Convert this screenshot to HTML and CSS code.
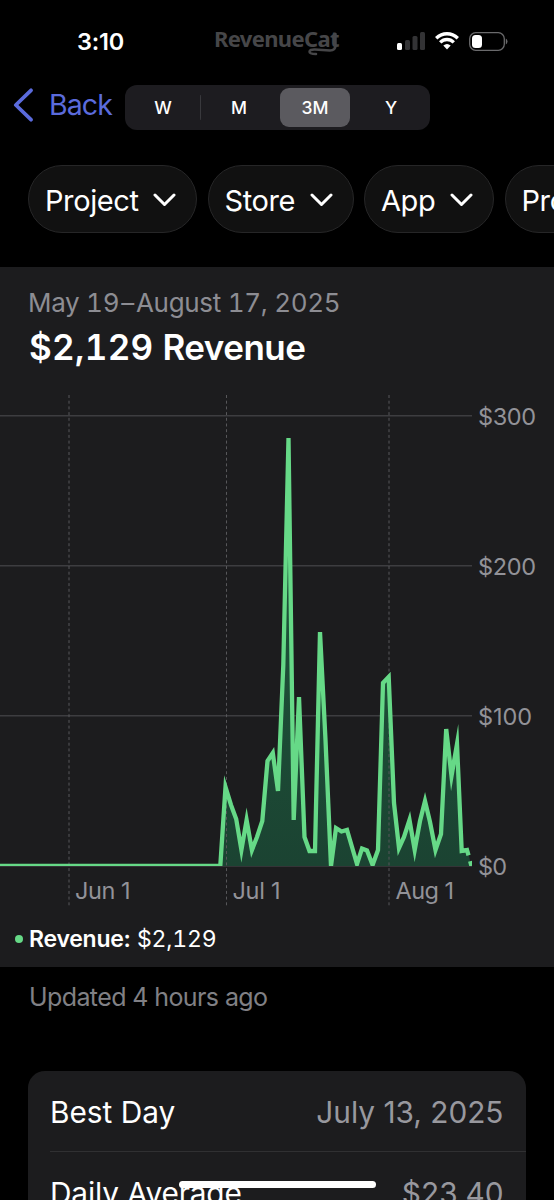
FILE: index.html
```html
<!DOCTYPE html>
<html lang="en">
<head>
  <meta charset="UTF-8">
  <meta name="viewport" content="width=device-width, initial-scale=1.0">
  <title>Revenue</title>
  <link rel="stylesheet" href="styles.css">
</head>
<body>
  <header>
    <!-- Status bar -->
    <div class="status-bar">
      <span class="time">3:10</span>
      <div class="logo">
        <span>RevenueCat</span>
        <svg class="logo-tail" width="36" height="28" viewBox="0 0 36 28">
          <path d="M31.500 4V15Q31.500 20.500 26 20.500L11 19.500Q5.500 19.300 5.500 21.800Q5.500 24 12 24" fill="none" stroke="#464648" stroke-width="2.500" stroke-linecap="round"/>
        </svg>
      </div>
      <div class="status-icons">
        <svg width="28" height="18" viewBox="0 0 28 18">
          <rect x="0" y="11" width="5" height="7" rx="1.500" fill="#fff"/>
          <rect x="8" y="8" width="5" height="10" rx="1.500" fill="#333335"/>
          <rect x="15.500" y="4" width="5" height="14" rx="1.500" fill="#333335"/>
          <rect x="23" y="0" width="5" height="18" rx="1.500" fill="#333335"/>
        </svg>
        <svg class="wifi" width="24" height="18" viewBox="0 0 24 18">
          <g fill="none" stroke="#fff" stroke-width="3.400">
            <path d="M1.200 6.200Q6 1.700 12 1.700T22.800 6.200"/>
            <path d="M5.200 10.400Q8.200 7.500 12 7.500T18.800 10.400"/>
          </g>
          <path d="M8.300 13.600Q12 10.600 15.700 13.600L12 17.500Z" fill="#fff"/>
        </svg>
        <svg class="battery" width="39" height="19" viewBox="0 0 39 19">
          <rect x="0.700" y="0.700" width="34.600" height="17.600" rx="6" fill="none" stroke="#6a6a6c" stroke-width="1.300"/>
          <rect x="3" y="3" width="10" height="13" rx="3.500" fill="#fff"/>
          <path d="M36.800 6.500Q38.500 7.500 38.500 9.500T36.800 12.500Z" fill="#6a6a6c"/>
        </svg>
      </div>
    </div>

    <!-- Navigation -->
    <nav class="nav-bar">
      <a class="back">
        <svg width="20" height="34" viewBox="0 0 20 34">
          <path d="M18 2.300L2.800 17L18 31.700" fill="none" stroke="#5b6bdc" stroke-width="3.700" stroke-linecap="round" stroke-linejoin="round"/>
        </svg>
        <span>Back</span>
      </a>
      <div class="segments">
        <span class="segment divided">W</span>
        <span class="segment">M</span>
        <span class="segment active">3M</span>
        <span class="segment">Y</span>
      </div>
    </nav>

    <!-- Filters -->
    <div class="filters">
      <button class="filter project"><span>Project</span>
        <svg width="23" height="14" viewBox="0 0 23 14"><path d="M2 2L11.500 11.500L21 2"/></svg>
      </button>
      <button class="filter store"><span>Store</span>
        <svg width="23" height="14" viewBox="0 0 23 14"><path d="M2 2L11.500 11.500L21 2"/></svg>
      </button>
      <button class="filter app"><span>App</span>
        <svg width="23" height="14" viewBox="0 0 23 14"><path d="M2 2L11.500 11.500L21 2"/></svg>
      </button>
      <button class="filter product"><span>Product</span>
        <svg width="23" height="14" viewBox="0 0 23 14"><path d="M2 2L11.500 11.500L21 2"/></svg>
      </button>
    </div>
  </header>

  <main>
    <!-- Revenue chart -->
    <section class="chart-section">
      <p class="date-range">May 19<span class="dash">–</span>August 17, 2025</p>
      <h1><span class="amount">$2,129</span> <span class="metric">Revenue</span></h1>
      <svg class="chart" width="554" height="540" viewBox="0 380 554 540">
        <defs>
          <clipPath id="plot"><rect x="0" y="390" width="472" height="476"/></clipPath>
          <linearGradient id="area" gradientUnits="userSpaceOnUse" x1="0" y1="438" x2="0" y2="866">
            <stop offset="0" stop-color="#1f5c3d"/>
            <stop offset="1" stop-color="#1b4332"/>
          </linearGradient>
        </defs>
        <g class="grid-lines">
          <path d="M0 415.800H472M0 565.800H472M0 715.800H472M0 866H472"/>
        </g>
        <g clip-path="url(#plot)">
          <path fill="url(#area)" d="M220.300 866L225.500 787L231 805L236.200 819L241.400 850L246.600 820L251.900 850L257 837L262.300 821L267.500 761L272.800 753L278 791L283.300 665L288.500 438L293.700 820L299 697L304.500 837L309.500 851H315L320 632L325.500 740L331 866L336 828L341.500 831.500L347 830L352 847L357 864L362 848.500L367 850.500L372.600 865L378 850L383 683L388.700 677L394 803L399 848L404 837L409.500 820L414.700 850L420 821L425 801L430 822L435.500 850L441 834L446.200 729L451.500 776L457 744L461.700 851L467 849L471.500 866Z"/>
        </g>
        <g class="month-lines">
          <path d="M69 395V906M226.500 395V906M389 395V906"/>
        </g>
        <g clip-path="url(#plot)" class="series">
          <path d="M-5 866H220.300L225.500 787L231 805L236.200 819L241.400 850L246.600 820L251.900 850L257 837L262.300 821L267.500 761L272.800 753L278 791L283.300 665L288.500 438L293.700 820L299 697L304.500 837L309.500 851H315L320 632L325.500 740L331 866L336 828L341.500 831.500L347 830L352 847L357 864L362 848.500L367 850.500L372.600 865L378 850L383 683L388.700 677L394 803L399 848L404 837L409.500 820L414.700 850L420 821L425 801L430 822L435.500 850L441 834L446.200 729L451.500 776L457 744L461.700 851L467 850"/>
          <path class="partial" d="M461.700 851L467 850L471.500 866"/>
        </g>
        <g class="axis-labels">
          <text x="478" y="425" textLength="58">$300</text>
          <text x="478" y="575" textLength="58">$200</text>
          <text x="478" y="725" textLength="54">$100</text>
          <text x="478" y="875" textLength="29">$0</text>
          <text x="75" y="899" textLength="55.500">Jun 1</text>
          <text x="232.500" y="899" textLength="48">Jul 1</text>
          <text x="395.500" y="899" textLength="58.500">Aug 1</text>
        </g>
      </svg>
      <div class="legend">
        <span class="dot"></span>
        <strong>Revenue:</strong>
        <span class="legend-value">$2,129</span>
      </div>
    </section>

    <p class="updated">Updated 4 hours ago</p>

    <!-- Summary -->
    <section class="summary">
      <div class="row">
        <span class="best-label">Best Day</span>
        <span class="best-value">July 13, 2025</span>
      </div>
      <div class="row">
        <span class="average-label">Daily Average</span>
        <span class="average-value">$23.40</span>
      </div>
    </section>
  </main>

  <div class="home-indicator"></div>
</body>
</html>
```
FILE: styles.css
```css
/* General Styles */
body {
  font-family: Inter, "Liberation Sans", sans-serif;
  margin: 0;
  height: 1200px;
  overflow: hidden;
  background-color: #000;
  color: #fff;
}

p, h1 {
  margin: 0;
}

svg {
  display: block;
  flex: none;
}

header {
  height: 267px;
  overflow: hidden;
}

/* Status Bar */
.status-bar {
  display: flex;
  align-items: center;
  height: 82px;
  padding-left: 77px;
}

.time {
  width: 137px;
  font-size: 23.5px;
  font-weight: 600;
  letter-spacing: -0.2px;
}

.logo {
  position: relative;
  width: 183px;
  margin-top: -7px;
  font-family: "Noto Sans", sans-serif;
  font-size: 22px;
  font-weight: 700;
  line-height: 28px;
  letter-spacing: -0.65px;
  color: #464648;
}

.logo-tail {
  position: absolute;
  left: 90px;
  top: 6px;
}

.status-icons {
  display: flex;
  align-items: center;
}

.wifi {
  margin-left: 10px;
}

.battery {
  margin-left: 10px;
}

/* Navigation */
.nav-bar {
  display: flex;
  height: 48px;
  padding: 3px 0 0 13px;
}

.back {
  display: flex;
  align-items: center;
  gap: 16px;
  width: 112px;
  height: 40px;
  line-height: 40px;
  font-size: 28.5px;
  letter-spacing: -0.9px;
  color: #5b6bdc;
}

.segments {
  display: grid;
  grid-template-columns: repeat(4, 1fr);
  box-sizing: border-box;
  width: 305px;
  height: 45px;
  padding: 3px 1px 3px 0;
  border-radius: 12px;
  background-color: #1d1c20;
}

.segment {
  margin: 0 3px;
  border-radius: 9px;
  text-align: center;
  font-size: 17.5px;
  font-weight: 500;
  line-height: 39px;
}

.divided {
  margin-right: 0;
  padding-right: 3px;
  background: linear-gradient(#39393d, #39393d) right center / 1px 25px no-repeat;
}

.active {
  background-color: #5b5a5f;
}

/* Filters */
.filters {
  display: flex;
  gap: 10.500px;
  padding: 32px 0 0 28px;
}

.filter {
  display: flex;
  flex: none;
  align-items: center;
  justify-content: space-between;
  box-sizing: border-box;
  height: 68px;
  padding: 2px 20px 0 16px;
  border: 1px solid #262627;
  border-radius: 34px;
  background-color: #111;
  color: #fff;
  font-family: inherit;
  font-size: 29px;
  letter-spacing: -0.4px;
}

.filter path {
  fill: none;
  stroke: #fff;
  stroke-width: 3;
  stroke-linecap: round;
  stroke-linejoin: round;
}

.project {
  width: 169px;
}

.store {
  width: 146px;
}

.app {
  width: 130px;
}

.product {
  width: 170px;
}

/* Chart */
.chart-section {
  height: 700px;
  background-color: #1c1c1e;
}

.date-range {
  padding: 20px 0 0 28px;
  font-size: 26px;
  line-height: 32px;
  letter-spacing: -0.3px;
  font-variant-numeric: tabular-nums;
  color: #8d8d93;
}

.dash {
  margin: 0 2px;
}

h1 {
  padding: 6px 0 0 29px;
  font-size: 35px;
  font-weight: 600;
  line-height: 44px;
  height: 45px;
  white-space: nowrap;
}

.amount {
  letter-spacing: 0.3px;
  font-variant-numeric: tabular-nums;
}

.metric {
  letter-spacing: -0.5px;
}

.chart {
  margin-top: 10px;
}

.grid-lines {
  stroke: #3d3d40;
  stroke-width: 1.500;
}

.month-lines {
  stroke: #57575a;
  stroke-width: 1;
  stroke-dasharray: 3 2.700;
}

.series {
  fill: none;
  stroke: #66d987;
  stroke-width: 4.300;
  stroke-miterlimit: 10;
}

.partial {
  stroke-dasharray: 11 6;
}

.axis-labels {
  fill: #929298;
  font-size: 23.5px;
}

.legend {
  display: flex;
  align-items: center;
  height: 38px;
  padding-left: 15px;
  font-size: 23px;
}

.dot {
  width: 8px;
  height: 8px;
  margin-right: 6px;
  border-radius: 50%;
  background-color: #66d987;
}

.legend strong {
  width: 108px;
  font-weight: 600;
  letter-spacing: -0.25px;
}

.legend-value {
  letter-spacing: -0.2px;
  font-variant-numeric: tabular-nums;
}

.updated {
  padding: 14px 0 0 29px;
  font-size: 25px;
  line-height: 32px;
  letter-spacing: -0.6px;
  color: #808085;
}

/* Summary */
.summary {
  margin: 58px 28.500px 0 28px;
  border-radius: 17px 17px 0 0;
  background-color: #1c1c1e;
}

.row {
  display: flex;
  justify-content: space-between;
  height: 80px;
  margin-left: 22px;
  padding-right: 22px;
  border-bottom: 1px solid #303032;
  font-size: 29.8px;
  line-height: 82px;
  white-space: nowrap;
}

.row span:last-child {
  color: #98989e;
}

.average-label {
  letter-spacing: -0.15px;
}

.home-indicator {
  position: absolute;
  left: 179px;
  top: 1181px;
  width: 197px;
  height: 7px;
  border-radius: 4px;
  background-color: #fff;
}
```
